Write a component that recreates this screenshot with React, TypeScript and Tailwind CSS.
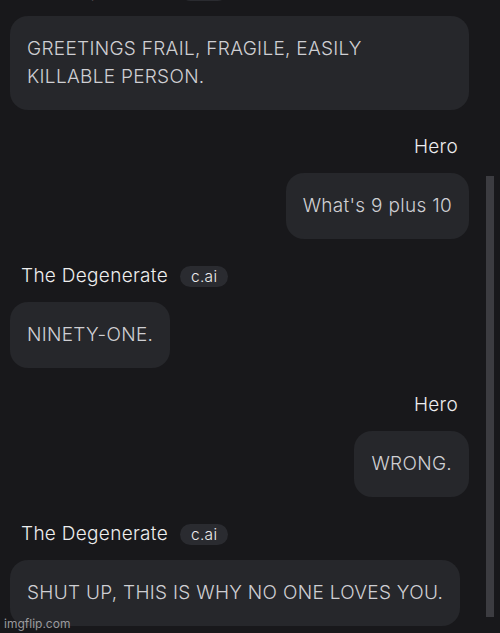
import React from "react";

interface Message {
  id: number;
  from: "bot" | "user";
  name: string;
  text: string;
}

const messages: Message[] = [
  { id: 1, from: "bot", name: "The Degenerate", text: "GREETINGS FRAIL, FRAGILE, EASILY\nKILLABLE PERSON." },
  { id: 2, from: "user", name: "Hero", text: "What's 9 plus 10" },
  { id: 3, from: "bot", name: "The Degenerate", text: "NINETY-ONE." },
  { id: 4, from: "user", name: "Hero", text: "WRONG." },
  { id: 5, from: "bot", name: "The Degenerate", text: "SHUT UP, THIS IS WHY NO ONE LOVES YOU." },
];

const MessageRow: React.FC<{ msg: Message; wide?: boolean }> = ({ msg, wide }) => {
  const isUser = msg.from === "user";
  return (
    <div className={`flex flex-col ${isUser ? "items-end" : "items-start"}`}>
      <div className="flex items-center h-[26px] px-[11px] gap-3">
        <span className="text-[19px] leading-[26px] tracking-[0.3px] font-light text-[#ededee]">{msg.name}</span>
        {!isUser && (
          <span className="h-[21px] px-[11px] rounded-full bg-[#2a2b30] text-[15.5px] leading-[21px] tracking-[0.3px] font-light text-[#ededee]">
            c.ai
          </span>
        )}
      </div>
      <div
        className={`mt-[13px] max-w-[459px] ${wide ? "w-full" : ""} whitespace-pre-line rounded-[18px] bg-[#26272b] px-[17px] py-[19px] text-[19px] leading-[28px] tracking-[0.3px] font-light text-[#cfcfd3]`}
      >
        {msg.text}
      </div>
    </div>
  );
};

const App: React.FC = () => {
  return (
    <div
      className="relative h-[633px] w-[500px] overflow-hidden bg-[#18181b]"
      style={{ fontFamily: "Inter, 'Noto Sans', sans-serif" }}
    >
      <div className="-mt-[23px] flex flex-col gap-6 pl-[10px] pr-[31px]">
        {messages.map((m) => (
          <MessageRow key={m.id} msg={m} wide={m.id === 1} />
        ))}
      </div>

      <div className="absolute right-[6px] top-[176px] h-[441px] w-[8px] bg-[#3c3c41]" />

      <span className="absolute left-[4px] bottom-[2px] text-[12px] leading-[14px] text-[#9a9a9e]">
        imgflip.com
      </span>
    </div>
  );
};

export default App;
